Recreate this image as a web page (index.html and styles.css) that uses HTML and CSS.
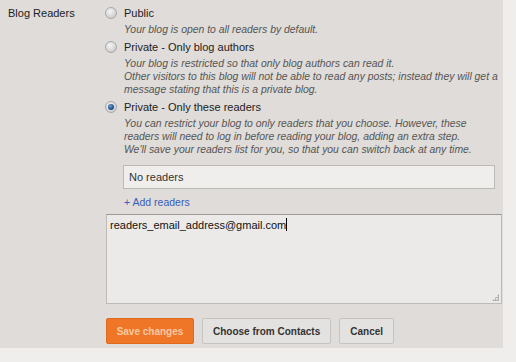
FILE: index.html
```html
<!DOCTYPE html>
<html lang="en">

<head>
    <meta charset="UTF-8">
    <title>Blog Readers</title>
    <link rel="stylesheet" href="styles.css">
</head>

<body>
    <div class="panel">
        <div class="row">
            <div class="row-label">Blog Readers</div>
            <div class="row-body">
                <!-- Reader options -->
                <div class="option">
                    <div class="option-head"><span class="radio"></span>Public</div>
                    <div class="option-desc">Your blog is open to all readers by default.</div>
                </div>
                <div class="option">
                    <div class="option-head"><span class="radio"></span>Private - Only blog authors</div>
                    <div class="option-desc">Your blog is restricted so that only blog authors can read it.<br>
                        Other visitors to this blog will not be able to read any posts; instead they will get a<br>
                        message stating that this is a private blog.</div>
                </div>
                <div class="option">
                    <div class="option-head"><span class="radio checked"></span>Private - Only these readers</div>
                    <div class="option-desc">You can restrict your blog to only readers that you choose. However, these<br>
                        readers will need to log in before reading your blog, adding an extra step.<br>
                        We'll save your readers list for you, so that you can switch back at any time.</div>
                    <div class="readers-box">No readers</div>
                    <a class="add-link" href="#">+ Add readers</a>
                </div>
            </div>
        </div>

        <div class="email-area">readers_email_address@gmail.com<span class="caret"></span>
            <span class="grip"></span>
        </div>

        <div class="actions">
            <button class="btn btn-save">Save changes</button>
            <button class="btn">Choose from Contacts</button>
            <button class="btn">Cancel</button>
        </div>
    </div>
</body>

</html>
```

FILE: styles.css
```css
body {
    margin: 0;
    font-family: "Liberation Sans", Arial, sans-serif;
    background-color: #efeeec;
    /* Light strip around the panel */
    height: 362px;
    overflow: hidden;
}

.panel {
    width: 503px;
    background-color: #dfdcd9;
    padding: 5px 0 4px 0;
    box-sizing: border-box;
}

.row {
    display: flex;
}

.row-label {
    width: 105px;
    padding-left: 8px;
    box-sizing: border-box;
    font-size: 11px;
    line-height: 16px;
    color: #222;
}

.row-body {
    flex: 1;
}

.option {
    margin-bottom: 3px;
}

.option-head {
    display: flex;
    align-items: center;
    font-size: 11px;
    line-height: 16px;
    color: #222;
}

.radio {
    width: 12px;
    height: 12px;
    border-radius: 50%;
    margin-right: 7px;
    box-sizing: border-box;
    border: 1px solid #a9a9a9;
    background: radial-gradient(circle at 40% 35%, #f4f4f4 0%, #d0d0d0 70%, #bdbdbd 100%);
    position: relative;
}

.radio.checked::after {
    content: "";
    position: absolute;
    left: 2px;
    top: 2px;
    width: 6px;
    height: 6px;
    border-radius: 50%;
    background: radial-gradient(circle at 40% 35%, #6d9ed3 0%, #1d4f8a 60%, #0d2c55 100%);
}

.option-desc {
    margin: 2px 0 0 19px;
    font-size: 10.4px;
    line-height: 13px;
    font-style: italic;
    color: #555;
    white-space: nowrap;
}

.readers-box {
    margin: 9px 0 0 18px;
    width: 372px;
    height: 24px;
    border: 1px solid #bcbab7;
    background-color: #efeeec;
    box-sizing: border-box;
    padding-left: 5px;
    font-size: 11px;
    line-height: 22px;
    color: #333;
}

.add-link {
    display: block;
    margin: 5px 0 0 19px;
    font-size: 10.5px;
    line-height: 16px;
    color: #3a5cbd;
    text-decoration: none;
}

.email-area {
    margin: 1px 0 0 106px;
    width: 396px;
    height: 90px;
    border: 1px solid #bdbbb8;
    border-top-color: #9c9a98;
    background-color: #eceae8;
    box-sizing: border-box;
    padding: 2px 3px;
    font-size: 11px;
    line-height: 16px;
    color: #111;
    position: relative;
}

.caret {
    display: inline-block;
    width: 1px;
    height: 13px;
    background-color: #000;
    vertical-align: -2px;
}

.grip {
    position: absolute;
    right: 2px;
    bottom: 2px;
    width: 7px;
    height: 7px;
    background: radial-gradient(circle, #999 0.8px, transparent 1px) 0 0 / 2.5px 2.5px;
    clip-path: polygon(100% 0, 100% 100%, 0 100%);
}

.actions {
    display: flex;
    gap: 8px;
    margin: 14px 0 0 106px;
}

.btn {
    height: 26px;
    padding: 0 10px;
    font-family: "Liberation Sans", Arial, sans-serif;
    font-size: 10px;
    font-weight: bold;
    color: #333;
    background-color: #e4e2e0;
    border: 1px solid #c6c4c1;
    border-radius: 2px;
}

.btn-save {
    width: 88px;
    padding: 0;
    background-color: #ef7626;
    border-color: #de6a1e;
    color: #f9c9a4;
}
```
